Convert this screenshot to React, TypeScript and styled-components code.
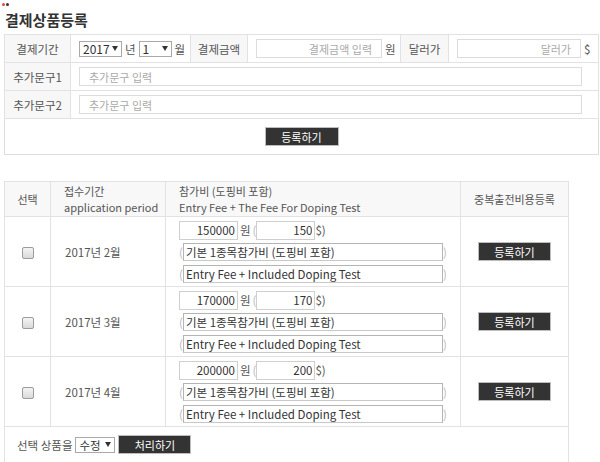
import React from "react";
import styled, { createGlobalStyle } from "styled-components";

const GlobalStyle = createGlobalStyle`
  html, body { margin: 0; padding: 0; background: #fff; }
  body {
    font-family: "Noto Sans CJK KR", "Noto Sans", sans-serif;
    font-size: 11px;
    color: #555;
  }
  * { box-sizing: border-box; }
`;

const Page = styled.div`
  width: 600px;
  height: 462px;
  overflow: hidden;
  padding-left: 4px;
`;

const Dots = styled.div`
  display: flex;
  gap: 1px;
  height: 8px;
  padding-top: 3px;
  margin-left: -2px;
`;

const Dot = styled.span<{ $color: string }>`
  width: 3px;
  height: 3px;
  border-radius: 50%;
  background: ${(p) => p.$color};
`;

const Title = styled.h2`
  margin: 2px 0 4px 1px;
  font-size: 15px;
  line-height: 20px;
  font-weight: bold;
  color: #333;
`;

const Table = styled.table<{ $width: number }>`
  width: ${(p) => p.$width}px;
  border-collapse: collapse;
  table-layout: fixed;
  border: 1px solid #ddd;
`;

const LabelCell = styled.th`
  height: 28px;
  padding: 0;
  background: #f7f7f7;
  border: 1px solid #e2e2e2;
  font-weight: normal;
  font-size: 11.5px;
  color: #555;
  text-align: center;
  white-space: nowrap;
`;

const ValueCell = styled.td<{ $pad?: number }>`
  height: 28px;
  padding: 0 0 0 ${(p) => p.$pad ?? 8}px;
  border: 1px solid #e2e2e2;
  white-space: nowrap;
  font-size: 11.5px;
  color: #555;
`;

const Inline = styled.div`
  display: flex;
  align-items: center;
  gap: 3px;
`;

const TextInput = styled.input<{ $width: number; $right?: boolean }>`
  width: ${(p) => p.$width}px;
  height: 19px;
  border: 1px solid #dcdcdc;
  padding: 0 9px;
  font-family: inherit;
  font-size: 11px;
  color: #333;
  text-align: ${(p) => (p.$right ? "right" : "left")};
  outline: none;
  &::placeholder { color: #aaa; }
`;

const SelectWrap = styled.span<{ $width: number }>`
  position: relative;
  display: inline-block;
  width: ${(p) => p.$width}px;
  height: 16px;
`;

const Select = styled.select<{ $size?: number }>`
  appearance: none;
  width: 100%;
  height: 100%;
  border: 1px solid #a9a9a9;
  border-radius: 0;
  background: #fff;
  padding: 0 0 0 3px;
  font-family: inherit;
  font-size: ${(p) => p.$size ?? 12}px;
  line-height: 14px;
  color: #333;
  outline: none;
`;

const Caret = styled.span`
  position: absolute;
  right: 4px;
  top: 5px;
  width: 0;
  height: 0;
  border-left: 3px solid transparent;
  border-right: 3px solid transparent;
  border-top: 5px solid #333;
  pointer-events: none;
`;

const Unit = styled.span`
  font-size: 11.5px;
  color: #555;
`;

const ButtonRow = styled.td`
  height: 36px;
  padding: 0;
  text-align: center;
  border-top: 1px solid #e2e2e2;
`;

const DarkButton = styled.button<{ $width?: number }>`
  width: ${(p) => p.$width ?? 74}px;
  height: 19px;
  padding: 0;
  background: #333;
  border: 1px solid #bdbdbd;
  color: #fff;
  font-family: inherit;
  font-size: 11px;
  line-height: 16px;
  cursor: pointer;
`;

const Gap = styled.div`
  height: 26px;
`;

const HeadCell = styled.th<{ $left?: boolean; $pad?: number }>`
  height: 35px;
  padding: 0 0 0 ${(p) => p.$pad ?? 0}px;
  background: #f8f8f8;
  border: 1px solid #e2e2e2;
  font-weight: normal;
  font-size: 11px;
  line-height: 16px;
  color: #555;
  white-space: nowrap;
  text-align: ${(p) => (p.$left ? "left" : "center")};
`;

const Cell = styled.td<{ $left?: boolean; $pad?: number }>`
  height: 70px;
  padding: 0 0 0 ${(p) => p.$pad ?? 0}px;
  border: 1px solid #e2e2e2;
  text-align: ${(p) => (p.$left ? "left" : "center")};
  vertical-align: middle;
  font-size: 11.5px;
  color: #555;
`;

const Check = styled.input`
  appearance: none;
  width: 12px;
  height: 12px;
  margin: 0;
  border: 1px solid #9c9c9c;
  border-radius: 2px;
  background: linear-gradient(#f4f4f4, #d9d9d9);
  vertical-align: middle;
`;

const FeeStack = styled.div`
  display: flex;
  flex-direction: column;
  gap: 4px;
  padding: 1px 0 0;
`;

const FeeLine = styled.div`
  display: flex;
  align-items: center;
  height: 18px;
  font-size: 11.5px;
  color: #555;
`;

const Paren = styled.span<{ $gap?: number }>`
  color: #bbb;
  font-size: 11.5px;
  line-height: 18px;
  margin-left: ${(p) => p.$gap ?? 0}px;
`;

const Won = styled.span`
  margin-left: 2px;
  color: #555;
`;

const AmountInput = styled.input`
  width: 59px;
  height: 19px;
  border: 1px solid #cfcfcf;
  padding: 0 2px 0 0;
  font-family: inherit;
  font-size: 11.5px;
  color: #333;
  text-align: right;
  outline: none;
`;

const DescInput = styled.input`
  width: 260px;
  height: 18px;
  border: 1px solid #b4b4b4;
  border-bottom-color: #c8c8c8;
  padding: 0 2px;
  font-family: inherit;
  font-size: 11.5px;
  color: #333;
  outline: none;
`;

const FootCell = styled.td`
  height: 38px;
  padding: 0 0 0 12px;
  border: 1px solid #e2e2e2;
  border-bottom: none;
  font-size: 11.5px;
  color: #555;
`;

const FootInline = styled.div`
  display: flex;
  align-items: center;
  gap: 3px;
  margin-top: -2px;
`;

const periods = [
  { month: "2017년 2월", won: "150000", usd: "150" },
  { month: "2017년 3월", won: "170000", usd: "170" },
  { month: "2017년 4월", won: "200000", usd: "200" },
];

const App = () => {
  return (
    <>
      <GlobalStyle />
      <Page>
        <Dots>
          <Dot $color="#e8473b" />
          <Dot $color="#333" />
        </Dots>
        <Title>결제상품등록</Title>

        <Table $width={594}>
          <colgroup>
            <col style={{ width: 66 }} />
            <col style={{ width: 120 }} />
            <col style={{ width: 57 }} />
            <col style={{ width: 153 }} />
            <col style={{ width: 48 }} />
            <col style={{ width: 150 }} />
          </colgroup>
          <tbody>
            <tr>
              <LabelCell>결제기간</LabelCell>
              <ValueCell>
                <Inline>
                  <SelectWrap $width={43}>
                    <Select defaultValue="2017">
                      <option>2017</option>
                    </Select>
                    <Caret />
                  </SelectWrap>
                  <Unit>년</Unit>
                  <SelectWrap $width={33}>
                    <Select defaultValue="1">
                      <option>1</option>
                    </Select>
                    <Caret />
                  </SelectWrap>
                  <Unit>월</Unit>
                </Inline>
              </ValueCell>
              <LabelCell>결제금액</LabelCell>
              <ValueCell $pad={8}>
                <Inline>
                  <TextInput $width={126} $right placeholder="결제금액 입력" />
                  <Unit>원</Unit>
                </Inline>
              </ValueCell>
              <LabelCell>달러가</LabelCell>
              <ValueCell $pad={8}>
                <Inline>
                  <TextInput $width={124} $right placeholder="달러가" />
                  <Unit>$</Unit>
                </Inline>
              </ValueCell>
            </tr>
            <tr>
              <LabelCell>추가문구1</LabelCell>
              <ValueCell colSpan={5}>
                <TextInput $width={503} placeholder="추가문구 입력" />
              </ValueCell>
            </tr>
            <tr>
              <LabelCell>추가문구2</LabelCell>
              <ValueCell colSpan={5}>
                <TextInput $width={503} placeholder="추가문구 입력" />
              </ValueCell>
            </tr>
            <tr>
              <ButtonRow colSpan={6}>
                <DarkButton $width={74}>등록하기</DarkButton>
              </ButtonRow>
            </tr>
          </tbody>
        </Table>

        <Gap />

        <Table $width={564}>
          <colgroup>
            <col style={{ width: 46 }} />
            <col style={{ width: 115 }} />
            <col style={{ width: 295 }} />
            <col style={{ width: 108 }} />
          </colgroup>
          <thead>
            <tr>
              <HeadCell>선택</HeadCell>
              <HeadCell $left $pad={13}>
                접수기간
                <br />
                application period
              </HeadCell>
              <HeadCell $left $pad={13}>
                참가비 (도핑비 포함)
                <br />
                Entry Fee + The Fee For Doping Test
              </HeadCell>
              <HeadCell>중복출전비용등록</HeadCell>
            </tr>
          </thead>
          <tbody>
            {periods.map((p) => (
              <tr key={p.month}>
                <Cell>
                  <Check type="checkbox" />
                </Cell>
                <Cell $left $pad={14}>
                  {p.month}
                </Cell>
                <Cell $left $pad={13}>
                  <FeeStack>
                    <FeeLine>
                      <AmountInput defaultValue={p.won} />
                      <Won>원</Won>
                      <Paren $gap={2}>(</Paren>
                      <AmountInput defaultValue={p.usd} />
                      <span>$)</span>
                    </FeeLine>
                    <FeeLine>
                      <Paren>(</Paren>
                      <DescInput defaultValue="기본 1종목참가비 (도핑비 포함)" />
                      <Paren>)</Paren>
                    </FeeLine>
                    <FeeLine>
                      <Paren>(</Paren>
                      <DescInput defaultValue="Entry Fee + Included Doping Test" />
                      <Paren>)</Paren>
                    </FeeLine>
                  </FeeStack>
                </Cell>
                <Cell>
                  <DarkButton $width={73}>등록하기</DarkButton>
                </Cell>
              </tr>
            ))}
            <tr>
              <FootCell colSpan={4}>
                <FootInline>
                  <Unit>선택 상품을</Unit>
                  <SelectWrap $width={40}>
                    <Select $size={11.5} defaultValue="수정">
                      <option>수정</option>
                    </Select>
                    <Caret />
                  </SelectWrap>
                  <DarkButton $width={73}>처리하기</DarkButton>
                </FootInline>
              </FootCell>
            </tr>
          </tbody>
        </Table>
      </Page>
    </>
  );
};

export default App;
